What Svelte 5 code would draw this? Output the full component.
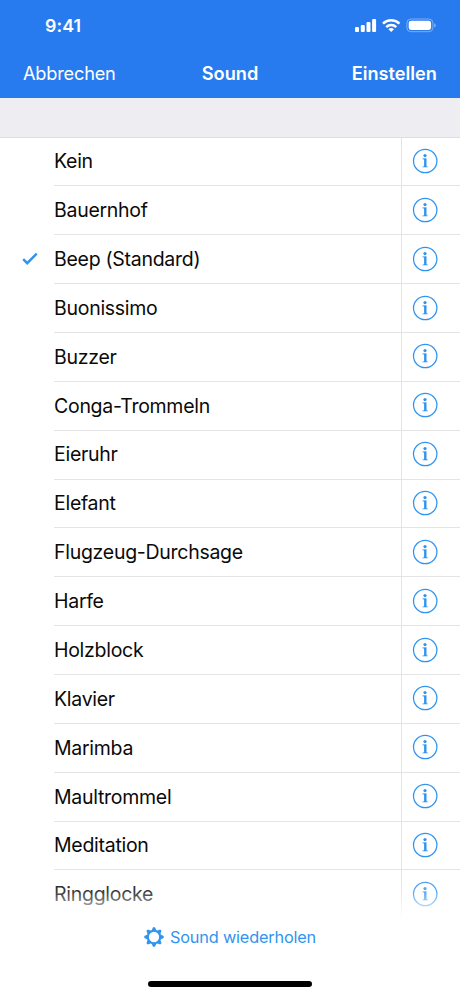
<script lang="ts">
	const sounds = [
		'Kein',
		'Bauernhof',
		'Beep (Standard)',
		'Buonissimo',
		'Buzzer',
		'Conga-Trommeln',
		'Eieruhr',
		'Elefant',
		'Flugzeug-Durchsage',
		'Harfe',
		'Holzblock',
		'Klavier',
		'Marimba',
		'Maultrommel',
		'Meditation',
		'Ringglocke'
	];

	let selected = $state('Beep (Standard)');

	const teeth = Array.from({ length: 8 }, (_, i) => i * 45);
</script>

<div class="screen">
	<header>
		<div class="status">
			<span class="time">9:41</span>
			<svg width="82" height="16" viewBox="0 0 82 16" fill="white" aria-hidden="true">
				<rect x="0" y="9" width="4" height="5" rx="1.1" />
				<rect x="5.8" y="7" width="4" height="7" rx="1.1" />
				<rect x="11.5" y="4" width="4" height="10" rx="1.1" />
				<rect x="17.1" y="1" width="4" height="13" rx="1.1" />
				<g fill="none" stroke="white" stroke-width="2.5">
					<path d="M28 5.7a11.6 11.6 0 0 1 16.4 0" />
					<path d="M31.2 9.1a7.1 7.1 0 0 1 10 0" />
				</g>
				<path d="M33.4 11.2a4.1 4.1 0 0 1 5.6 0l-2.8 2.9z" />
				<rect x="51.9" y="1" width="26" height="12.7" rx="4" fill="none" stroke="white" stroke-opacity="0.4" />
				<rect x="53.7" y="2.8" width="22.4" height="9.1" rx="2.3" />
				<path d="M79.3 5.2c1.8.7 1.8 3.6 0 4.4z" fill-opacity="0.5" />
			</svg>
		</div>
		<nav>
			<button class="cancel">Abbrechen</button>
			<h1>Sound</h1>
			<button class="save">Einstellen</button>
		</nav>
	</header>

	<div class="spacer"></div>

	<ul>
		{#each sounds as sound}
			<li>
				<span class="mark">
					{#if sound === selected}
						<svg width="16" height="14" viewBox="0 0 16 14" aria-hidden="true">
							<path d="M1.2 7.2l4 4L14.7 1.6" fill="none" stroke="#2f94f0" stroke-width="2.4" />
						</svg>
					{/if}
				</span>
				<button class="name" onclick={() => (selected = sound)}>{sound}</button>
				<button class="info" aria-label="Info">
					<svg width="26" height="26" viewBox="0 0 26 26" aria-hidden="true">
						<circle cx="13.2" cy="13" r="11.7" fill="none" stroke="#2f94f0" stroke-width="1.25" />
						<circle cx="13" cy="7.6" r="1.6" fill="#2f94f0" />
						<path
							fill="#2f94f0"
							d="M10.5 10.6l4-.4v7.5c0 .6.3.8 1.3.9v.7h-5.3v-.7c1.2-.1 1.6-.3 1.6-.9v-5.5c0-.6-.4-.8-1.6-.9z"
						/>
					</svg>
				</button>
			</li>
		{/each}
	</ul>

	<footer>
		<button class="repeat">
			<svg width="20" height="20" viewBox="-10 -10 20 20" aria-hidden="true">
				<circle r="6.2" fill="none" stroke="#2f94f0" stroke-width="2.1" />
				{#each teeth as angle}
					<path d="M-2.4-6.5L-1-9.7H1L2.4-6.5z" fill="#2f94f0" transform="rotate({angle})" />
				{/each}
			</svg>
			<span>Sound wiederholen</span>
		</button>
		<div class="home"></div>
	</footer>
</div>

<style>
	:global(body) {
		background: #fff;
	}

	.screen {
		position: relative;
		width: 460px;
		height: 996px;
		overflow: hidden;
		background: #fff;
		color: #0a0a0a;
		font-family: Inter, 'Liberation Sans', sans-serif;
	}

	button {
		padding: 0;
		border: 0;
		background: none;
		color: inherit;
		font: inherit;
		text-align: left;
		white-space: nowrap;
	}

	header {
		box-sizing: border-box;
		height: 98px;
		background: #277bee;
		color: #fff;
	}

	.status {
		display: flex;
		align-items: center;
		justify-content: space-between;
		box-sizing: border-box;
		height: 50px;
		padding: 2px 23px 0 45px;
	}

	.time {
		padding-bottom: 2px;
		font-size: 17.8px;
		font-weight: 600;
		letter-spacing: 0.1px;
	}

	nav {
		display: grid;
		grid-template-columns: 1fr auto 1fr;
		align-items: center;
		height: 46.5px;
		padding: 0 23px;
		font-size: 18.2px;
	}

	.cancel {
		letter-spacing: -0.2px;
	}

	h1 {
		margin: 0;
		font-size: 18.2px;
		font-weight: 600;
	}

	.save {
		justify-self: end;
		font-weight: 600;
	}

	.spacer {
		box-sizing: border-box;
		height: 39.6px;
		border-bottom: 1px solid #dfdfe3;
		background: #eeeef2;
	}

	ul {
		margin: 0;
		padding: 0;
		list-style: none;
	}

	li {
		display: grid;
		grid-template-columns: 54px 347px 59px;
		height: 48.87px;
	}

	.mark {
		display: flex;
		align-items: center;
		padding: 0 0 2px 22px;
	}

	.name,
	.info {
		border-bottom: 1px solid #e4e4e6;
	}

	.name {
		padding-bottom: 0.4px;
		font-size: 19.5px;
		letter-spacing: -0.28px;
	}

	.info {
		display: flex;
		align-items: center;
		padding: 0 0 1px 10px;
		border-left: 1px solid #e4e4e6;
	}

	footer {
		position: absolute;
		left: 0;
		right: 0;
		bottom: 0;
		display: flex;
		flex-direction: column;
		align-items: center;
		justify-content: space-between;
		box-sizing: border-box;
		height: 126px;
		padding: 57px 0 9px;
		background: linear-gradient(rgba(255, 255, 255, 0), rgba(255, 255, 255, 0.2) 22px, #fff 50px);
	}

	.repeat {
		display: flex;
		align-items: center;
		gap: 6px;
		color: #2f94f0;
		font-size: 16.3px;
		letter-spacing: -0.18px;
	}

	.home {
		width: 164px;
		height: 6px;
		border-radius: 3px;
		background: #000;
	}
</style>
